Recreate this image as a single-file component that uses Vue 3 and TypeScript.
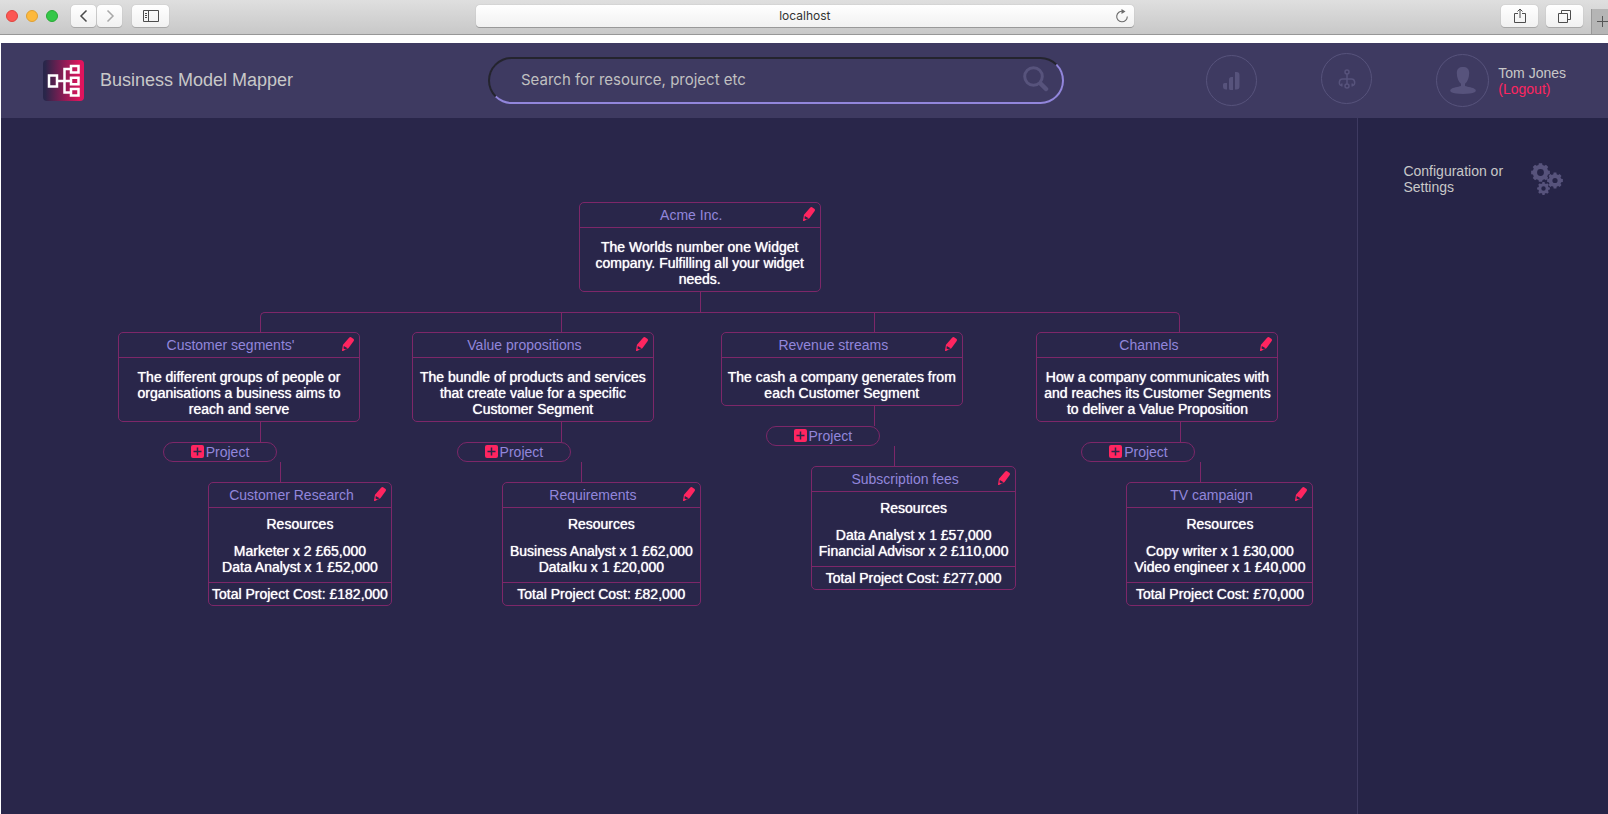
<script setup lang="ts">
interface Project {
  name: string
  resources: string[]
  total: string
}

interface Segment {
  name: string
  description: string
  project: Project
}

const segments: Segment[] = [
  {
    name: "Customer segments'",
    description: 'The different groups of people or organisations a business aims to reach and serve',
    project: {
      name: 'Customer Research',
      resources: ['Marketer x 2 £65,000', 'Data Analyst x 1 £52,000'],
      total: '£182,000',
    },
  },
  {
    name: 'Value propositions',
    description: 'The bundle of products and services that create value for a specific Customer Segment',
    project: {
      name: 'Requirements',
      resources: ['Business Analyst x 1 £62,000', 'DataIku x 1 £20,000'],
      total: '£82,000',
    },
  },
  {
    name: 'Revenue streams',
    description: 'The cash a company generates from each Customer Segment',
    project: {
      name: 'Subscription fees',
      resources: ['Data Analyst x 1 £57,000', 'Financial Advisor x 2 £110,000'],
      total: '£277,000',
    },
  },
  {
    name: 'Channels',
    description: 'How a company communicates with and reaches its Customer Segments to deliver a Value Proposition',
    project: {
      name: 'TV campaign',
      resources: ['Copy writer x 1 £30,000', 'Video engineer x 1 £40,000'],
      total: '£70,000',
    },
  },
]

/** Outline of a toothed wheel with a round hole, for use with fill-rule evenodd. */
function gear(cx: number, cy: number, outer: number, inner: number, hole: number): string {
  const teeth = 8
  const step = (Math.PI * 2) / teeth
  const point = (r: number, a: number) => `${(cx + r * Math.cos(a)).toFixed(2)} ${(cy + r * Math.sin(a)).toFixed(2)}`
  const points: string[] = []
  for (let i = 0; i < teeth; i++) {
    const a = i * step
    points.push(point(inner, a - step * 0.33), point(outer, a - step * 0.22), point(outer, a + step * 0.22), point(inner, a + step * 0.33))
  }
  return `M${points.join('L')}ZM${cx - hole} ${cy}a${hole} ${hole} 0 1 0 ${hole * 2} 0a${hole} ${hole} 0 1 0 ${-hole * 2} 0Z`
}

const gears = [gear(9.5, 9.5, 9.5, 7.8, 3.4), gear(24, 17.5, 8, 6.4, 2.6), gear(12.5, 25.5, 6.5, 5.2, 2.2)]
</script>

<template>
  <div class="browser">
    <div class="toolbar">
      <div class="lights"><i class="light red"></i><i class="light amber"></i><i class="light green"></i></div>
      <div class="history">
        <button class="tool half" aria-label="Back">
          <svg width="10" height="14" viewBox="0 0 10 14"><path d="M7.500 1.500 2 7l5.500 5.500" fill="none" stroke="#4a4a4a" stroke-width="1.500" /></svg>
        </button>
        <button class="tool half" aria-label="Forward">
          <svg width="10" height="14" viewBox="0 0 10 14"><path d="M2.500 1.500 8 7l-5.500 5.500" fill="none" stroke="#a8a8a8" stroke-width="1.500" /></svg>
        </button>
      </div>
      <button class="tool" aria-label="Sidebar">
        <svg width="16" height="12" viewBox="0 0 16 12" fill="none" stroke="#4d4d4d"><path d="M.5.5h15v11H.5ZM5.500.5v11M2 3.500h2M2 5.500h2M2 7.500h2" /></svg>
      </button>
      <div class="address">
        <span class="host">localhost</span>
        <button class="reload" aria-label="Reload">
          <svg width="14" height="14" viewBox="0 0 14 14"><path d="M8 2.300A5.300 5.300 0 1 0 12.300 7.500" fill="none" stroke="#6b6b6b" stroke-width="1.100" /><path d="M6.500 0 10.500 2.600 6.500 5Z" fill="#6b6b6b" /></svg>
        </button>
      </div>
      <div class="tools-end">
        <button class="tool" aria-label="Share">
          <svg width="12" height="16" viewBox="0 0 12 16" fill="none" stroke="#4d4d4d"><path d="M4 5.500H.5v9h11v-9H8M6 10V1M3.500 3.500 6 1l2.500 2.500" /></svg>
        </button>
        <button class="tool" aria-label="Tabs">
          <svg width="13" height="13" viewBox="0 0 13 13" fill="none" stroke="#4d4d4d"><path d="M.5 3.500h9v9h-9ZM3.500 3.500v-3h9v9h-3" /></svg>
        </button>
      </div>
      <button class="new-tab" aria-label="New tab">
        <svg width="11" height="11" viewBox="0 0 11 11"><path d="M5.500 0v11M0 5.500h11" stroke="#555" /></svg>
      </button>
    </div>

    <div class="app">
      <header class="header">
        <div class="brand">
          <svg class="logo" width="41" height="41" viewBox="0 0 41 41">
            <defs>
              <linearGradient id="logo-fill"><stop offset="0.050" stop-color="#29264a" /><stop offset="0.900" stop-color="#e0145d" /></linearGradient>
            </defs>
            <rect width="41" height="41" rx="4" fill="url(#logo-fill)" />
            <g fill="none" stroke="#fff" stroke-width="2.500">
              <path d="M6 15.500h8v11H6ZM28 6h7.500v6.500H28ZM28 17.800h7.500v6.500H28ZM28 29h7.500v6.500H28ZM14 21h14M28 9h-6.500v23.500H28" />
            </g>
          </svg>
          <h1>Business Model Mapper</h1>
        </div>
        <form class="search" @submit.prevent>
          <input type="text" aria-label="Search" placeholder="Search for resource, project etc" />
          <button class="search-button" aria-label="Search">
            <svg width="26" height="26" viewBox="0 0 26 26" fill="none" stroke="#57537c"><circle cx="10.500" cy="10.500" r="8.800" stroke-width="3" /><path d="m17.500 17.500 5.500 5.500" stroke-width="4.500" stroke-linecap="round" /></svg>
          </button>
        </form>
        <nav class="actions">
          <button class="round" aria-label="Reports">
            <svg width="17" height="18" viewBox="0 0 17 18" fill="#57537c"><path d="M0 12.500A1.500 1.500 0 0 1 1.500 11H4v6.500H3a3 3 0 0 1-3-3ZM6 7.500A2.500 2.500 0 0 1 8.500 5H10v13H7.500A1.500 1.500 0 0 1 6 16.500ZM12 0h1.500A3 3 0 0 1 16.500 3v11.500A3 3 0 0 1 13.500 17.500H12Z" /></svg>
          </button>
          <button class="round raised" aria-label="Structure">
            <svg width="18" height="20" viewBox="0 0 18 20" fill="none" stroke="#57537c" stroke-width="1.500"><circle cx="9" cy="3" r="2" /><circle cx="9" cy="17" r="2" /><path d="M9 5v10M3.800 16.500C1.500 16 1 14.500 1.500 12.500 1.800 10.500 2.500 10 4.500 10h9c2 0 2.700.5 3 2.500.5 2 0 3.500-2.300 4M3.800 14.500v3M14.200 14.500v3" /></svg>
          </button>
          <div class="user">
            <span class="round avatar">
              <svg width="26" height="27" viewBox="0 0 26 27" fill="#57537c"><path d="M13 0c4 0 6.300 2 6.200 6-.1 5-1.700 9-4.200 10.800V19c3 1 8 1.200 10.400 3.500.7.800.5 2-.8 2.800C22.500 26.500 18 27 13 27S3.500 26.500 1.400 25.300C.1 24.500 0 23.300.6 22.500 3 20.200 8 20 11 19v-2.200C8.500 15 6.900 11 6.800 6 6.700 2 9 0 13 0Z" /></svg>
            </span>
            <div class="identity"><span>Tom Jones</span><a href="#logout">(Logout)</a></div>
          </div>
        </nav>
      </header>

      <div class="content">
        <main class="canvas">
          <div class="tree">
            <div class="root">
              <article class="card described">
                <header class="card-head">
                  <h2>Acme Inc.</h2>
                  <button class="edit" aria-label="Edit Acme Inc.">
                    <svg width="12" height="14" viewBox="0 0 12 14"><path d="M7.300.6Q8.300-.3 9.500.5L11.300 1.800Q12.400 2.700 11.700 3.900L6.400 11.200 1 14Q0 14.300 0 13.200L1 7.800Z" fill="#ff2560" /><path d="m1.800 9 3.800 2.300-2.200 1.300L1.500 11.500Z" fill="#29264a" /></svg>
                  </button>
                </header>
                <p>The Worlds number one Widget company. Fulfilling all your widget needs.</p>
              </article>
            </div>
            <ul class="branches">
              <li v-for="segment in segments" :key="segment.name" class="branch">
                <article class="card described">
                  <header class="card-head">
                    <h2>{{ segment.name }}</h2>
                    <button class="edit" :aria-label="`Edit ${segment.name}`">
                      <svg width="12" height="14" viewBox="0 0 12 14"><path d="M7.300.6Q8.300-.3 9.500.5L11.300 1.800Q12.400 2.700 11.700 3.900L6.400 11.200 1 14Q0 14.300 0 13.200L1 7.800Z" fill="#ff2560" /><path d="m1.800 9 3.800 2.300-2.200 1.300L1.500 11.500Z" fill="#29264a" /></svg>
                    </button>
                  </header>
                  <p>{{ segment.description }}</p>
                </article>
                <div class="stem"></div>
                <button class="add-project">
                  <svg width="13" height="13" viewBox="0 0 13 13"><rect width="13" height="13" rx="2" fill="#ff2560" /><path d="M6.500 2.500v8M2.500 6.500h8" stroke="#29264a" stroke-width="1.500" /></svg>
                  <span>Project</span>
                </button>
                <div class="stem shifted"></div>
                <article class="card project">
                  <header class="card-head">
                    <h2>{{ segment.project.name }}</h2>
                    <button class="edit" :aria-label="`Edit ${segment.project.name}`">
                      <svg width="12" height="14" viewBox="0 0 12 14"><path d="M7.300.6Q8.300-.3 9.500.5L11.300 1.800Q12.400 2.700 11.700 3.900L6.400 11.200 1 14Q0 14.300 0 13.200L1 7.800Z" fill="#ff2560" /><path d="m1.800 9 3.800 2.300-2.200 1.300L1.500 11.500Z" fill="#29264a" /></svg>
                    </button>
                  </header>
                  <h3>Resources</h3>
                  <ul class="resources">
                    <li v-for="resource in segment.project.resources" :key="resource">{{ resource }}</li>
                  </ul>
                  <footer>Total Project Cost: {{ segment.project.total }}</footer>
                </article>
              </li>
            </ul>
          </div>
        </main>
        <aside class="sidebar">
          <a class="settings" href="#settings">
            <span>Configuration or Settings</span>
            <svg width="32" height="32" viewBox="0 0 32 32" fill="#57537c" fill-rule="evenodd"><path v-for="d in gears" :key="d" :d="d" /></svg>
          </a>
        </aside>
      </div>
    </div>
  </div>
</template>

<style>
html,
body,
#app {
  height: 100%;
}
</style>

<style scoped>
* {
  box-sizing: border-box;
  margin: 0;
}

button {
  padding: 0;
  border: 0;
  background: none;
  color: inherit;
  font: inherit;
  cursor: pointer;
}

ul {
  padding: 0;
  list-style: none;
}

svg {
  display: block;
  flex: none;
}

.browser {
  display: flex;
  flex-direction: column;
  min-height: 100%;
  background: #fff;
  font: 14px/16px "Liberation Sans", Arial, sans-serif;
  overflow: hidden;
}

.toolbar {
  position: relative;
  display: flex;
  align-items: center;
  height: 35px;
  padding: 0 25px 2px 6px;
  border-bottom: 1px solid #979797;
  background: linear-gradient(#dfdfdf, #c8c8c8);
}

.lights {
  display: flex;
  gap: 8px;
  width: 65px;
}

.light {
  width: 12px;
  height: 12px;
  border: 1px solid;
  border-radius: 50%;
}

.red {
  border-color: #e0443e;
  background: #fc5753;
}

.amber {
  border-color: #dea033;
  background: #fdb93d;
}

.green {
  border-color: #27aa35;
  background: #34c748;
}

.history {
  display: flex;
  gap: 1px;
  margin-right: 10px;
}

.tool {
  display: flex;
  align-items: center;
  justify-content: center;
  width: 37px;
  height: 22px;
  border-radius: 4px;
  background: linear-gradient(#fff, #f1f1f1);
  box-shadow: 0 0 1px #999, 0 1px 0 #aaa;
}

.half {
  width: 25px;
}

.address {
  position: absolute;
  right: 29.500%;
  left: 29.600%;
  display: flex;
  align-items: center;
  height: 22px;
  padding: 0 5px 0 19px;
  border-radius: 4px;
  background: linear-gradient(#fff, #f1f1f1);
  box-shadow: 0 0 1px #999, 0 1px 0 #999;
}

.host {
  flex: 1;
  color: #333;
  font: 12px/16px Inter, sans-serif;
  text-align: center;
}

.tools-end {
  display: flex;
  gap: 8px;
  margin-left: auto;
}

.new-tab {
  position: absolute;
  right: 0;
  bottom: 0;
  display: flex;
  align-items: center;
  justify-content: flex-end;
  width: 17px;
  height: 25px;
  border-left: 1px solid #999;
  background: #b5b5b5;
  overflow: hidden;
}

.app {
  display: flex;
  flex: 1;
  flex-direction: column;
  margin: 8px 0 0 1px;
  background: #29264a;
  color: #c8c8c8;
}

.header {
  position: relative;
  display: flex;
  align-items: center;
  height: 75px;
  padding: 0 42px;
  background: #3e3a61;
}

.brand {
  display: flex;
  align-items: center;
  gap: 16px;
}

h1 {
  padding-bottom: 2px;
  font-size: 18px;
  font-weight: 400;
  line-height: 24px;
}

.search {
  position: absolute;
  left: 487px;
  width: 576px;
}

.search input {
  display: block;
  width: 100%;
  height: 47px;
  padding: 0 64px 2px 31px;
  border: 2px solid;
  border-color: #24242e #9286dc #9286dc #24242e;
  border-radius: 24px;
  outline: 0;
  background: transparent;
  color: #c8c8c8;
  font: 15px/20px Inter, sans-serif;
}

.search input::placeholder {
  color: #c0c0c0;
  opacity: 1;
}

.search-button {
  position: absolute;
  top: 9px;
  right: 15px;
}

.actions {
  display: flex;
  align-items: center;
  margin-left: auto;
}

.round {
  display: flex;
  align-items: center;
  justify-content: center;
  width: 51px;
  height: 51px;
  margin-right: 64px;
  border: 1px solid #57537c;
  border-radius: 50%;
}

.raised {
  margin-bottom: 4px;
}

.user {
  display: flex;
  align-items: center;
  gap: 9px;
}

.avatar {
  width: 53px;
  height: 53px;
  margin: 0;
}

.identity {
  display: flex;
  flex-direction: column;
}

.identity a {
  color: #ff2560;
  text-decoration: none;
}

.content {
  display: flex;
  flex: 1;
}

.canvas {
  flex: 1;
  padding: 84px 44px 0 117px;
}

.tree {
  width: max-content;
}

.root {
  position: relative;
  display: flex;
  justify-content: center;
  padding: 0 32px 20px 0;
}

.root::after {
  position: absolute;
  bottom: 0;
  left: calc(50% - 16px);
  height: 20px;
  border-left: 1px solid #7d2769;
  content: "";
}

.branches {
  display: flex;
  align-items: flex-start;
  gap: 20px;
}

.branch {
  position: relative;
  display: flex;
  flex-direction: column;
  align-items: flex-start;
  padding-top: 20px;
}

.branch::before {
  position: absolute;
  top: 0;
  right: -20px;
  left: 0;
  border-top: 1px solid #7d2769;
  content: "";
}

.branch::after {
  position: absolute;
  top: 0;
  left: calc(50% + 5px);
  height: 20px;
  border-left: 1px solid #7d2769;
  content: "";
}

.branch:first-child::before {
  left: calc(50% + 5px);
  height: 20px;
  border-left: 1px solid #7d2769;
  border-top-left-radius: 5px;
}

.branch:last-child::before {
  right: calc(50% - 5px);
  height: 20px;
  border-right: 1px solid #7d2769;
  border-top-right-radius: 5px;
}

.branch:first-child::after,
.branch:last-child::after {
  content: none;
}

.stem {
  width: 1px;
  height: 20px;
  margin-left: calc(50% + 5px);
  background: #7d2769;
}

.shifted {
  margin-left: calc(50% + 25px);
}

.card {
  border: 1px solid #7d2769;
  border-radius: 5px;
  color: #fff;
  text-align: center;
  text-shadow: 0 0 1px #fff;
}

.described {
  width: 242px;
}

.described p {
  padding: 11px 4px 4px;
}

.card-head {
  display: flex;
  align-items: center;
  height: 25px;
  padding-right: 5px;
  border-bottom: 1px solid #7d2769;
  text-shadow: none;
}

h2,
h3 {
  font-size: 14px;
  font-weight: 400;
  line-height: 16px;
}

h2 {
  flex: 1;
  color: #9286dc;
}

.edit {
  margin-bottom: 2px;
}

.add-project {
  display: flex;
  align-items: center;
  justify-content: center;
  gap: 2px;
  width: 114px;
  height: 20px;
  margin-left: 45px;
  border: 1px solid #7d2769;
  border-radius: 10px;
  color: #9286dc;
}

.add-project svg {
  margin-bottom: 2px;
}

.project {
  margin-left: 90px;
}

h3 {
  padding: 8px 0 11px;
}

.resources {
  padding: 0 7px 7px;
}

.project footer {
  padding: 3px;
  border-top: 1px solid #7d2769;
}

.sidebar {
  width: 251px;
  padding: 45px 45px 0;
  border-left: 1px solid #3e3a61;
  background: #262447;
}

.settings {
  display: flex;
  align-items: center;
  justify-content: space-between;
  color: inherit;
  text-decoration: none;
}

.settings span {
  width: 104px;
}
</style>
